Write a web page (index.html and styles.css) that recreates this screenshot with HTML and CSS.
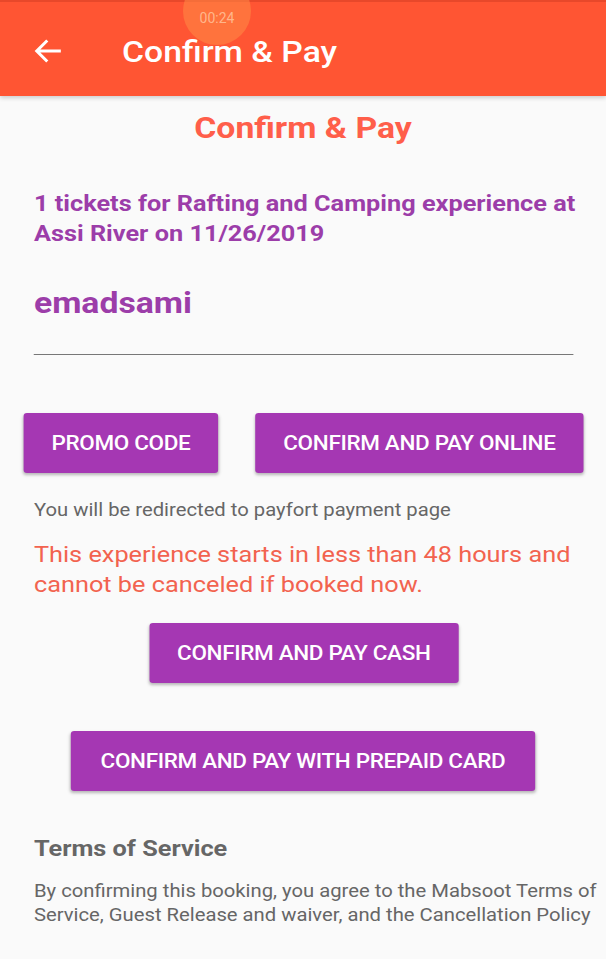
FILE: index.html
```html
<!DOCTYPE html>
<html>
<head>
<meta charset="utf-8">
<link rel="stylesheet" href="styles.css">
</head>
<body>
<div class="screen">
  <header class="appbar">
    <svg class="back" width="25" height="24" viewBox="0 0 28 24" preserveAspectRatio="none"><path d="M27 12H3M13.5 1.5L3 12l10.5 10.5" fill="none" stroke="#fff" stroke-width="3"/></svg>
    <span class="appbar-title">Confirm &amp; Pay</span>
  </header>
  <main class="content">
    <h1 class="heading">Confirm &amp; Pay</h1>
    <p class="tickets">1 tickets for Rafting and Camping experience at Assi River on 11/26/2019</p>
    <div class="user">emadsami</div>
    <div class="rule"></div>
    <div class="row">
      <button class="btn promo">PROMO CODE</button>
      <button class="btn online">CONFIRM AND PAY ONLINE</button>
    </div>
    <p class="note">You will be redirected to payfort payment page</p>
    <p class="warn">This experience starts in less than 48 hours and cannot be canceled if booked now.</p>
    <div class="center"><button class="btn cash">CONFIRM AND PAY CASH</button></div>
    <div class="center"><button class="btn prepaid">CONFIRM AND PAY WITH PREPAID CARD</button></div>
    <h2 class="tos">Terms of Service</h2>
    <p class="tos-text">By confirming this booking, you agree to the Mabsoot Terms of Service, Guest Release and waiver, and the Cancellation Policy</p>
  </main>
</div>
<div class="timer"><span>00:24</span></div>
</body>
</html>
```
FILE: styles.css
```css
html, body { margin: 0; padding: 0; }
body {
  position: relative;
  background: #fafafa;
  font-family: Roboto, "Noto Sans", sans-serif;
  width: 606px;
  height: 959px;
  overflow: hidden;
}
.screen {
  width: 539px;
  transform: scaleX(1.1243);
  transform-origin: 0 0;
}
.appbar {
  height: 96px;
  background: #ff5533;
  border-top: 2px solid #e8482a;
  box-sizing: border-box;
  display: flex;
  align-items: center;
  box-shadow: 0 2px 4px rgba(0,0,0,0.18);
}
.back { margin-left: 30px; margin-top: 4px; }
.appbar-title {
  margin-left: 53.5px;
  color: #fff;
  font-size: 30px;
  font-weight: 500;
  margin-top: 4px;
}
.timer {
  position: absolute;
  left: 183px;
  top: -23px;
  width: 68px;
  height: 68px;
  border-radius: 50%;
  background: rgba(255, 140, 70, 0.55);
  display: flex;
  align-items: flex-end;
  justify-content: center;
}
.timer span {
  color: rgba(255, 200, 160, 0.8);
  font-family: Roboto, sans-serif;
  font-size: 14px;
  margin-bottom: 19px;
}
.content { padding: 0 19px 0 30.2px; }
.heading {
  margin: 14px -19px 0 -30.2px;
  text-align: center;
  color: #ff5e4a;
  font-size: 30px;
  font-weight: 700;
  line-height: 36px;
}
.tickets {
  margin: 42px 0 0;
  color: #9c3da9;
  font-size: 22.5px;
  font-weight: 700;
  line-height: 30px;
}
.user {
  margin-top: 37px;
  color: #9c3da9;
  font-size: 30px;
  font-weight: 700;
  line-height: 36px;
}
.rule {
  margin-top: 33px;
  width: 480px;
  height: 1px;
  background: #777;
}
.row {
  display: flex;
  gap: 33px;
  margin-top: 58px;
  margin-left: -8.9px;
}
.btn {
  height: 60px;
  border: none;
  border-radius: 3px;
  background: #a537b3;
  color: #fff;
  font-family: Roboto, sans-serif;
  font-size: 20px;
  font-weight: 500;
  letter-spacing: -0.3px;
  box-shadow: 0 2px 3px rgba(0,0,0,0.28);
  padding: 0;
}
.promo { width: 172.5px; }
.online { width: 292.5px; }
.note {
  margin: 25px 0 0;
  color: #666;
  font-size: 18px;
  line-height: 24px;
}
.warn {
  margin: 17px 0 0;
  color: #f2634f;
  font-size: 22.5px;
  line-height: 30px;
}
.center {
  display: flex;
  justify-content: center;
  margin: 0 -19px 0 -30.2px;
}
.cash { width: 275.5px; margin-top: 24px; margin-left: 1.5px; }
.prepaid { width: 412.5px; margin-top: 48px; }
.tos {
  margin: 42px 0 0;
  color: #666;
  font-size: 22.5px;
  font-weight: 700;
  line-height: 30px;
}
.tos-text {
  margin: 16px -17px 0 0;
  color: #666;
  font-size: 18px;
  line-height: 24px;
}
```
